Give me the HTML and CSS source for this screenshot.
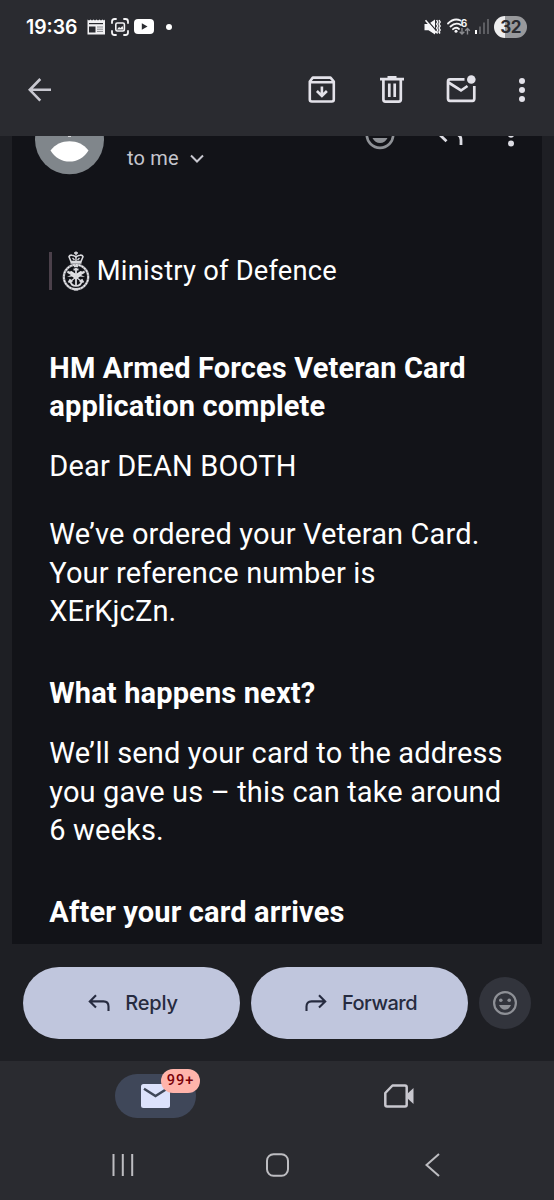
FILE: index.html
```html
<!DOCTYPE html>
<html lang="en">
  <head>
    <meta charset="utf-8" />
    <title>HM Armed Forces Veteran Card application complete</title>
    <link rel="stylesheet" href="styles.css">
  </head>
  <body>
    <div class="screen">
      <header class="top">
        <div class="status">
          <span class="time">19:36</span>
          <svg class="news" width="18" height="16" viewBox="0 0 18 16">
            <path d="M0.5 0.5l1.500 1 1.500-1 1.500 1 1.500-1 1.500 1 1.500-1 1.500 1 1.500-1 1.500 1 1.500-1 1.500 1 1-1V15.500H0.500z" fill="#f1f1f3" />
            <path d="M2 4.600h14" stroke="#2a2b30" stroke-width="1.200" />
            <path d="M10 8h6M10 10.200h6M10 12.400h6" stroke="#85868a" stroke-width="1" />
            <path d="M2 7.500h6.500v6h-6.500z" fill="#2a2b30" />
          </svg>
          <svg class="capture" width="18" height="18" viewBox="0 0 18 18" fill="none" stroke="#f4f4f6" stroke-width="1.800" stroke-linecap="round">
            <path d="M1 5V3.500Q1 1 3.500 1H5M13 1h1.500Q17 1 17 3.500V5M17 13v1.500Q17 17 14.500 17H13M5 17H3.500Q1 17 1 14.500V13" />
            <rect x="4.800" y="5" width="8.600" height="8" rx="1.500" stroke-width="1.600" />
            <path d="M6 11.500l2-2.500 1.500 1 2-2 1 3.500z" fill="#f4f4f6" stroke="none" />
          </svg>
          <svg class="video" width="20" height="15" viewBox="0 0 20 15">
            <rect width="20" height="15" rx="4" fill="#fff" />
            <path d="M7.800 4.200v6.600l5.700-3.300z" fill="#2a2b30" />
          </svg>
          <span class="dot"></span>
          <svg class="mute" width="17" height="16" viewBox="0 0 17 16">
            <path d="M0.500 5h4L11 0.500v15L4.500 11.200H0.500z" fill="#f8f8fa" />
            <path d="M2.500 0.500L12 11.500" stroke="#2a2b30" stroke-width="1.300" />
            <path d="M1.500 1.200L12.500 14" stroke="#f8f8fa" stroke-width="1.500" />
            <path d="M12.600 1l1.200 2-1.200 2 1.200 2-1.200 2 1.200 2-1.200 2 1 1.500M15 1l1.200 2-1.200 2 1.200 2-1.200 2 1.200 2-1.200 2 1 1.500" fill="none" stroke="#f8f8fa" stroke-width="1.400" />
          </svg>
          <svg class="wifi" width="24" height="18" viewBox="0 0 24 18">
            <path d="M1 5.500Q7 -0.500 13.500 2.500M3.500 8.500Q8.500 3.800 14 7M6 11.200Q9 8.500 12 11" fill="none" stroke="#f4f4f6" stroke-width="1.800" stroke-linecap="round" />
            <circle cx="9" cy="13.200" r="1.500" fill="#f4f4f6" />
            <text class="wifi-gen" x="13.800" y="8.700">6</text>
            <path d="M15 10v6M12.700 13.700l2.300 2.300 2.300-2.300M20.500 16.500v-6M18.200 12.800l2.300-2.300 2.300 2.300" fill="none" stroke="#8b8c90" stroke-width="1.400" />
          </svg>
          <svg class="signal" width="14" height="15" viewBox="0 0 14 15">
            <path d="M1 11v4" stroke="#fff" stroke-width="2" />
            <path d="M5 7.500V15M9 3.500V15M13 0V15" stroke="#66676b" stroke-width="1.700" />
          </svg>
          <span class="battery">32</span>
        </div>
        <nav class="toolbar">
          <svg class="back" width="24" height="24" viewBox="0 0 24 24" fill="none" stroke="#c8c8d0" stroke-width="2.600">
            <path d="M12.300 1L1.800 11.800l10.500 10.800M1.800 11.800H23" />
          </svg>
          <svg class="archive" width="28" height="28" viewBox="0 0 28 28" fill="none" stroke="#e3e2e9" stroke-width="2.600">
            <path d="M1.800 5.500L4.800 1.600H22.500L25.800 5.500V23.500Q25.800 25.500 23.800 25.500H3.800Q1.800 25.500 1.800 23.500zM2 6.300H26" stroke-linejoin="round" />
            <path d="M13.900 10.500v9M8.900 15l5 5 5-5" />
          </svg>
          <svg class="trash" width="24" height="28" viewBox="0 0 24 28" fill="none" stroke="#e3e2e9" stroke-width="2.700">
            <path d="M0 3.200H24M3.400 3v20.600Q3.400 25.700 5.400 25.700H18.800Q20.800 25.700 20.800 23.600V3M9.300 7.500v13.500M14.700 7.500v13.500" />
            <path d="M7.500 1.300h9" />
          </svg>
          <svg class="unread" width="30" height="28" viewBox="0 0 30 28" fill="none" stroke="#e3e2e9" stroke-width="2.700">
            <path d="M18.500 4.400H4Q2 4.400 2 6.400V23.500Q2 25.800 4 25.800H26.500Q28.300 25.800 28.300 23.500V11" />
            <path d="M2.500 7.500L15 15.500 21.500 11" />
            <circle cx="25.300" cy="4.500" r="4.300" fill="#e3e2e9" stroke="none" />
          </svg>
          <svg class="more" width="6" height="24" viewBox="0 0 6 24" fill="#e3e2e9">
            <circle cx="3" cy="3" r="3" /><circle cx="3" cy="12" r="3" /><circle cx="3" cy="21" r="3" />
          </svg>
        </nav>
      </header>

      <main class="mail">
        <!-- sender row, scrolled half under the toolbar -->
        <div class="sender">
          <svg class="avatar" width="69" height="39" viewBox="0 0 69 39">
            <circle cx="34.500" cy="3.800" r="34.500" fill="#80868b" />
            <path d="M15.500 14.500C24 2 45 2 53.500 14.500C45 29.300 24 29.300 15.500 14.500z" fill="#fff" />
            <path d="M33 0h3v0.700h-3z" fill="#fff" />
          </svg>
          <span class="to">to me</span>
          <svg class="chevron" width="14" height="10" viewBox="0 0 14 10" fill="none" stroke="#c8c8d0" stroke-width="2">
            <path d="M1 1.500l6 6 6-6" />
          </svg>
          <svg class="react" width="30" height="14" viewBox="0 0 30 14">
            <circle cx="15" cy="-1.300" r="13.200" fill="none" stroke="#8e9196" stroke-width="2.600" />
            <path d="M7.500 2h15Q20 7 15 7T7.500 2z" fill="#8e9196" />
          </svg>
          <svg class="reply-cut" width="26" height="10" viewBox="0 0 26 10" fill="none" stroke="#dcdce3" stroke-width="2.800">
            <path d="M1 -2L8.500 5.300M18 -2Q23 -1 23 4V9" />
          </svg>
          <svg class="more-cut" width="6" height="11" viewBox="0 0 6 11" fill="#dcdce3">
            <circle cx="3" cy="-1.200" r="3" /><circle cx="3" cy="7.500" r="3" />
          </svg>
        </div>

        <article class="message">
          <div class="brand">
            <svg class="crest" width="28" height="40" viewBox="0 0 28 40" fill="none" stroke="#d9d9dd">
              <path d="M14 0.500v4M12 2h4" stroke-width="1.500" />
              <path d="M9 10.500L7 5.800Q7.500 3.800 10 4.200Q12.500 4.500 14 6Q15.500 4.500 18 4.200Q20.500 3.800 21 5.800L19 10.500z" stroke-width="1.600" />
              <path d="M14 5v6M10.500 7l2 2M17.500 7l-2 2" stroke-width="1.400" />
              <path d="M8.500 11.500h11" stroke-width="2.500" />
              <circle cx="14" cy="26" r="12.200" stroke-width="2.400" stroke="#a9a9af" />
              <circle cx="14" cy="26" r="12.200" stroke-width="1.200" stroke="#f2f2f4" stroke-dasharray="1.800 1.200" />
              <path d="M4.500 21.500l5-1.500 4.500 3 4.500-3 5 1.500-4.500 2.500 4 2-5-0.500-4 3-4-3-5 0.500 4-2z" fill="#e4e4e7" stroke="none" />
              <path d="M5.500 20l15 11M22.500 20l-15 11" stroke-width="1.300" />
              <path d="M14 17v18M11.500 18.500h5" stroke-width="1.800" />
              <path d="M8 29.500Q9 35 14 35T20 29.500M6.500 31.500l1.500-2.500 2.500 1.500M21.500 31.500L20 29l-2.500 1.500" stroke-width="1.700" />
              <path d="M12 14.300h4v2h-4zM12 37.200h4v2.200h-4z" fill="#d9d9dd" stroke="none" />
            </svg>
            <span class="ministry">Ministry of Defence</span>
          </div>
          <h1 class="h-title">HM Armed Forces Veteran Card<br>application complete</h1>
          <p class="dear">Dear DEAN BOOTH</p>
          <p class="ordered">We’ve ordered your Veteran Card.<br>Your reference number is<br>XErKjcZn.</p>
          <h2 class="h-next">What happens next?</h2>
          <p class="send">We’ll send your card to the address<br>you gave us – this can take around<br>6 weeks.</p>
          <h2 class="h-after">After your card arrives</h2>
        </article>
      </main>

      <div class="actions">
        <button class="pill">
          <svg width="22" height="18" viewBox="0 0 22 18" fill="none" stroke="#262b3f" stroke-width="2.100">
            <path d="M8 1.200L1.800 7.400 8 13.600M1.800 7.400H15.500Q20.500 7.400 20.500 12.400V17" />
          </svg>
          <span class="reply-label">Reply</span>
        </button>
        <button class="pill">
          <svg width="22" height="18" viewBox="0 0 22 18" fill="none" stroke="#262b3f" stroke-width="2.100">
            <path d="M14 1.200L20.200 7.400 14 13.600M20.200 7.400H6.500Q1.500 7.400 1.500 12.400V17" />
          </svg>
          <span class="forward-label">Forward</span>
        </button>
        <button class="emoji">
          <svg width="24" height="24" viewBox="0 0 24 24" fill="#8e9096">
            <circle cx="12" cy="12" r="10.900" fill="none" stroke="#8e9096" stroke-width="2.200" />
            <circle cx="7.800" cy="9.200" r="1.800" /><circle cx="16.200" cy="9.200" r="1.800" />
            <path d="M6 14h12Q16 18.800 12 18.800T6 14z" />
          </svg>
        </button>
      </div>

      <footer class="bottom">
        <div class="tabs">
          <div class="tab-mail">
            <svg width="30" height="24" viewBox="0 0 30 24">
              <rect x="0" width="29" height="24" rx="2.500" fill="#dce2fc" />
              <path d="M3 4.800L14.500 12 26 4.800" fill="none" stroke="#3f4759" stroke-width="2.500" />
            </svg>
            <span class="badge">99+</span>
          </div>
          <svg class="meet" width="30" height="24" viewBox="0 0 30 24">
            <path d="M8.500 1.500H21Q22.700 1.500 22.700 3.200V20.800Q22.700 22.500 21 22.500H3Q1.300 22.500 1.300 20.800V9z" fill="none" stroke="#c8c7ce" stroke-width="2.500" stroke-linejoin="round" />
            <path d="M22.500 10.500L29.500 4v16L22.500 13.500z" fill="#c8c7ce" />
          </svg>
        </div>
        <div class="sysnav">
          <svg width="22" height="24" viewBox="0 0 22 24" stroke="#bdbdc1" stroke-width="2">
            <path d="M1.500 1v22M10.800 1v22M20.200 1v22" />
          </svg>
          <svg class="home" width="24" height="24" viewBox="0 0 24 24" fill="none" stroke="#bdbdc1" stroke-width="2">
            <rect x="1" y="1.200" width="21" height="21.600" rx="6.500" />
          </svg>
          <svg class="sys-back" width="15" height="24" viewBox="0 0 15 24" fill="none" stroke="#bdbdc1" stroke-width="2">
            <path d="M14 1L1.500 12 14 23" />
          </svg>
        </div>
      </footer>
    </div>
  </body>
</html>
```
FILE: styles.css
```css
body {
  margin: 0;
  background-color: #1e1f24;
  font-family: Roboto, sans-serif;
}

svg {
  display: block;
  flex: none;
}

.screen {
  width: 554px;
  height: 1200px;
  overflow: hidden;
  display: flex;
  flex-direction: column;
}

.top {
  height: 136px;
  background-color: #2a2b30;
}

.status {
  display: flex;
  align-items: center;
  height: 53px;
  padding-left: 26px;
}

.time {
  width: 61px;
  font-family: Inter, sans-serif;
  font-size: 19.4px;
  font-weight: 600;
  color: #fff;
}

.capture {
  margin-left: 6px;
}

.video {
  margin-left: 5px;
}

.dot {
  width: 6px;
  height: 6px;
  margin-left: 12px;
  border-radius: 50%;
  background-color: #fff;
}

.mute {
  margin-left: 252px;
}

.wifi {
  margin-left: 6px;
}

.wifi-gen {
  font: 700 10px Inter, sans-serif;
  fill: #f4f4f6;
}

.signal {
  margin-left: 4px;
}

.battery {
  width: 33px;
  height: 22px;
  margin-left: 5px;
  border-radius: 11px;
  background: linear-gradient(to right, #eeeeef 32%, #98999c 32%);
  color: #2a2b30;
  font-family: Inter, sans-serif;
  font-size: 17px;
  font-weight: 700;
  line-height: 22px;
  letter-spacing: -0.5px;
  text-align: center;
}

.toolbar {
  display: flex;
  align-items: center;
  height: 73px;
  padding-left: 28px;
}

.archive {
  margin-left: 256px;
}

.trash {
  margin-left: 43.5px;
}

.unread {
  margin-left: 42.5px;
  margin-top: -2px;
}

.more {
  margin-left: 43px;
}

.mail {
  height: 808px;
  margin: 0 12px;
  overflow: hidden;
  background-color: #121318;
}

.sender {
  display: flex;
  align-items: flex-start;
  height: 116px;
  padding-left: 23px;
}

.to {
  width: 52px;
  margin: 10px 0 0 23px;
  color: #c5c6cd;
  font-size: 20px;
  line-height: 24px;
  letter-spacing: 0.2px;
  white-space: nowrap;
}

.chevron {
  margin: 18px 0 0 11px;
}

.react {
  margin-left: 161px;
}

.reply-cut {
  margin-left: 43px;
}

.more-cut {
  margin-left: 43.5px;
}

.message {
  padding-left: 37.3px;
  color: #fff;
  font-size: 29px;
  line-height: 38.6px;
  letter-spacing: 0.14px;
  white-space: nowrap;
}

.brand {
  display: flex;
  align-items: center;
  height: 38px;
  padding-left: 10px;
  border-left: 3px solid #4b404a;
}

.ministry {
  margin-left: 6.5px;
  font-size: 27.3px;
  letter-spacing: 0.22px;
}

.message h1,
.message h2,
.message p {
  margin: 0;
  font-size: inherit;
}

.message .h-title {
  margin: 58.7px 0 21.4px;
}

.message .ordered {
  margin: 29.1px 0 43.2px;
}

.message .send {
  margin: 21.4px 0 43.2px;
}

.actions {
  display: flex;
  align-items: center;
  gap: 11px;
  height: 117px;
  padding-left: 23px;
}

.pill {
  display: flex;
  align-items: center;
  justify-content: center;
  gap: 15px;
  width: 217px;
  height: 72px;
  padding: 0 0 0 3px;
  border: none;
  border-radius: 36px;
  background-color: #c0c6dd;
  color: #262b3f;
  font-family: Inter, sans-serif;
  font-size: 20px;
  font-weight: 500;
}

.reply-label {
  letter-spacing: -0.2px;
}

.forward-label {
  letter-spacing: -0.5px;
}

.emoji {
  display: flex;
  align-items: center;
  justify-content: center;
  width: 52px;
  height: 52px;
  padding: 0;
  border: none;
  border-radius: 50%;
  background-color: #32343c;
}

.bottom {
  height: 139px;
  background-color: #2a2b30;
}

.tabs {
  display: flex;
  align-items: center;
  height: 69px;
  padding-left: 115px;
}

.tab-mail {
  position: relative;
  display: flex;
  align-items: center;
  justify-content: center;
  width: 81px;
  height: 44px;
  border-radius: 22px;
  background-color: #3f4759;
}

.badge {
  position: absolute;
  top: -5px;
  left: 46px;
  width: 39px;
  height: 24px;
  border-radius: 12px;
  background-color: #ffb4ab;
  color: #7a0008;
  font-size: 14.5px;
  font-weight: 500;
  line-height: 24px;
  letter-spacing: 1px;
  text-align: center;
}

.meet {
  margin-left: 188px;
}

.sysnav {
  display: flex;
  align-items: center;
  height: 70px;
  padding-left: 112px;
}

.home {
  margin-left: 132px;
}

.sys-back {
  margin-left: 135px;
}
```
